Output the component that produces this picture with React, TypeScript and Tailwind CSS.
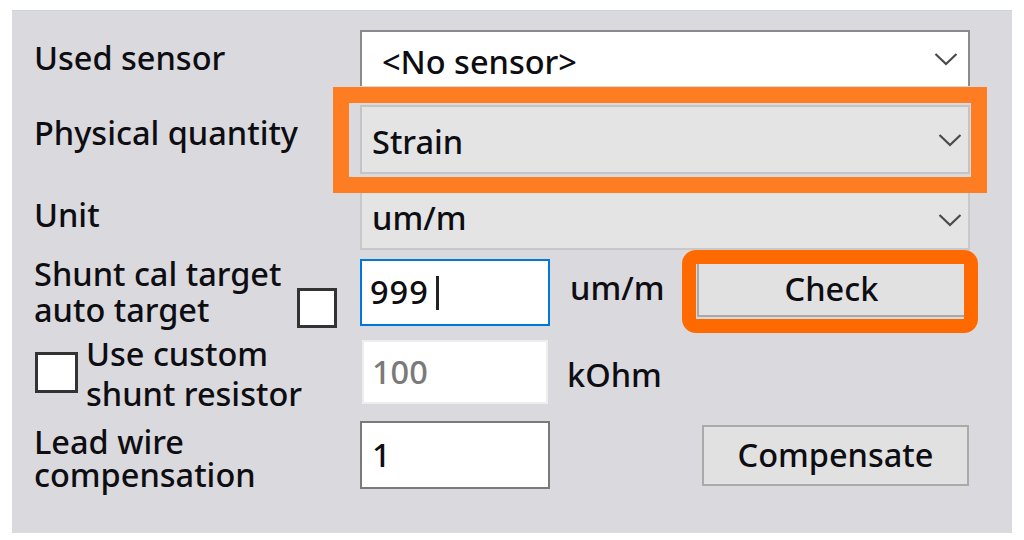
import React from "react";

function Chevron() {
  return (
    <svg width="24" height="14" viewBox="0 0 24 14" className="shrink-0">
      <path d="M1.5 2 L12 12 L22.5 2" fill="none" stroke="#4a4a4a" strokeWidth="2.2" />
    </svg>
  );
}

function CheckBox({ className }: { className?: string }) {
  return <div className={"bg-white border-[3px] border-[#333] " + (className ?? "")} />;
}

export default function App() {
  return (
    <div
      className="w-[1024px] h-[540px] bg-white pt-[10px] pl-[12px] text-[32.5px] font-medium text-[#0d0d12]"
      style={{ fontFamily: '"Noto Sans", "Open Sans", sans-serif' }}
    >
      <div className="relative w-[1000px] h-[523px] bg-[#dad9dd] border-t border-[#c9d3e0] pt-[19px]">
        {/* Used sensor */}
        <div className="flex items-center h-[56px]">
          <div className="w-[348px] pl-[22px] leading-none">Used sensor</div>
          <div className="w-[610px] h-full bg-white border-2 border-[#8a8a8a] border-b-0 flex items-center justify-between pl-[20px] pr-[10px]">
            <span className="mt-[6px]">&lt;No sensor&gt;</span>
            <Chevron />
          </div>
        </div>

        {/* Physical quantity */}
        <div className="flex items-center h-[69px] mt-[19px]">
          <div className="w-[348px] pl-[22px] leading-none -mt-[12px]">Physical quantity</div>
          <div className="w-[610px] h-full bg-[#e4e4e4] border-2 border-[#c4c4c4] flex items-center justify-between pl-[10px] pr-[6px]">
            <span className="mt-[6px]">Strain</span>
            <Chevron />
          </div>
        </div>

        {/* Unit */}
        <div className="flex items-center h-[58px] mt-[18px]">
          <div className="w-[348px] pl-[22px] leading-none -mt-[12px]">Unit</div>
          <div className="w-[610px] h-full bg-[#e4e4e4] border-2 border-[#c8c8c8] border-t-0 flex items-center justify-between pl-[10px] pr-[6px]">
            <span className="-mt-[4px]">um/m</span>
            <Chevron />
          </div>
        </div>

        {/* Shunt cal target */}
        <div className="flex h-[67px] mt-[9px]">
          <div className="w-[348px] pl-[22px] flex items-start">
            <div className="leading-[36px] -mt-[3px] w-[263px]">
              Shunt cal target
              <br />
              auto target
            </div>
            <CheckBox className="w-[40px] h-[40px] mt-[29px]" />
          </div>
          <div className="w-[190px] h-full bg-white border-2 border-[#0078d7] flex items-center pl-[8px]">
            <span className="tracking-[1px]">999</span>
            <span className="inline-block w-[3px] h-[34px] bg-[#222] ml-[7px]" />
          </div>
          <div className="w-[147px] pl-[20px] flex items-center -mt-[8px]">um/m</div>
          <div className="w-[269px] h-[55px] mt-[3px] bg-[#e1e1e1] border-2 border-[#a9a9a9] flex items-center justify-center">
            Check
          </div>
        </div>

        {/* Use custom shunt resistor */}
        <div className="flex h-[64px] mt-[14px]">
          <div className="w-[350px] pl-[23px] flex items-start">
            <CheckBox className="w-[43px] h-[41px] mt-[12px] shrink-0" />
            <div className="leading-[40px] -mt-[6px] ml-[8px]">
              Use custom
              <br />
              shunt resistor
            </div>
          </div>
          <div className="w-[186px] h-full bg-white border-2 border-[#eeeeee] flex items-center pl-[8px] text-[#7a7a7a]">
            100
          </div>
          <div className="pl-[19px] flex items-center mt-[6px]">kOhm</div>
        </div>

        {/* Lead wire compensation */}
        <div className="flex h-[68px] mt-[17px]">
          <div className="w-[348px] pl-[22px] leading-[33px] mt-[4px]">
            Lead wire
            <br />
            compensation
          </div>
          <div className="w-[190px] h-full bg-white border-2 border-[#7a7a7a] flex items-center pl-[10px]">1</div>
          <div className="w-[152px]" />
          <div className="w-[267px] h-[61px] mt-[4px] bg-[#e1e1e1] border-2 border-[#aaaaaa] flex items-center justify-center">
            Compensate
          </div>
        </div>

        {/* highlight boxes */}
        <div className="absolute left-[321px] top-[76px] w-[654px] h-[106px] border-[16px] border-[#ff7d22]" />
        <div className="absolute left-[670px] top-[239px] w-[296px] h-[83px] border-[14px] border-[#ff6a00] rounded-[14px]" />
      </div>
    </div>
  );
}
